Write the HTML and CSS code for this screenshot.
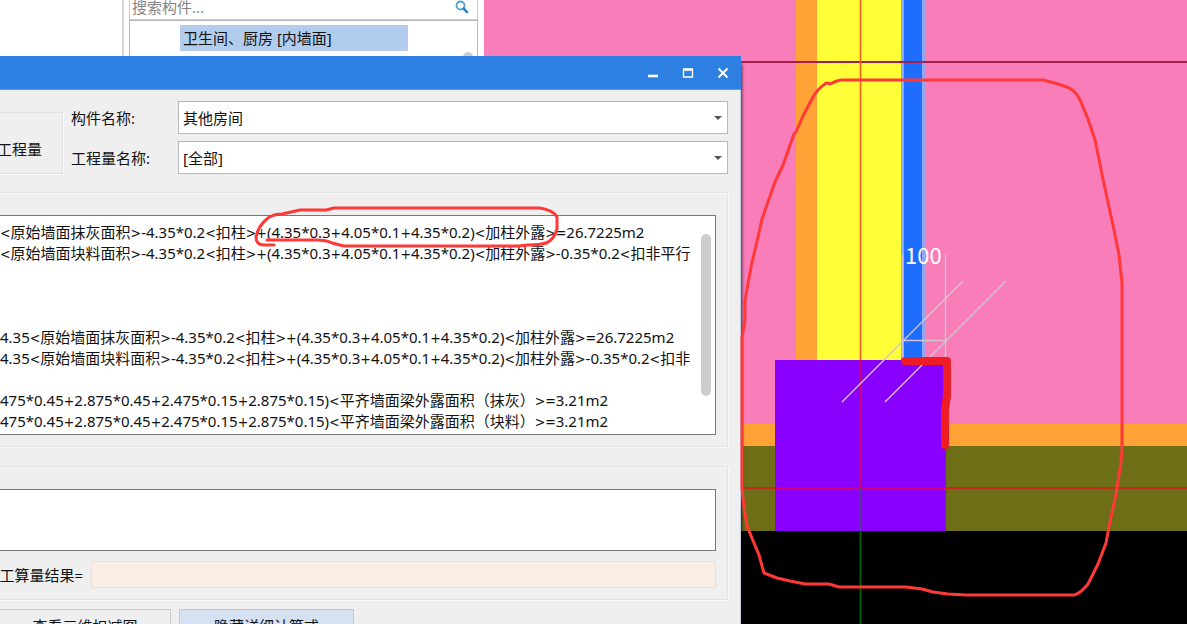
FILE: index.html
```html
<!DOCTYPE html>
<html lang="zh-CN">
<head>
<meta charset="utf-8">
<title>查看工程量计算式</title>
<link rel="stylesheet" href="styles.css">
</head>
<body>
<div class="app">
  <aside class="tree"></aside>
  <section class="components">
    <div class="search">
      <input class="search-input" type="text" placeholder="搜索构件..." aria-label="搜索构件">
      <svg class="search-icon" viewBox="0 0 14 14" aria-hidden="true">
        <circle cx="5.5" cy="5.5" r="4" fill="none" stroke="#4fa0d4" stroke-width="1.8"/>
        <path d="M8.6 8.6 12 12" stroke="#2f86c4" stroke-width="2.6" stroke-linecap="round"/>
      </svg>
    </div>
    <div class="component-list">
      <div class="component">卫生间、厨房 [内墙面]</div>
      <span class="list-thumb"></span>
    </div>
  </section>
  <main class="canvas">
    <svg class="drawing" viewBox="484 0 703 624" preserveAspectRatio="xMinYMin slice" role="img" aria-label="平面图">
      <rect x="484" y="0" width="703" height="624" fill="#000"/>
      <rect x="484" y="0" width="703" height="425" fill="#f97db9"/>
      <rect x="796" y="0" width="22" height="425" fill="#ffa337"/>
      <rect x="817" y="0" width="85" height="362" fill="#ffff37"/>
      <rect x="901" y="0" width="24" height="360" fill="#8fa8ef"/>
      <rect x="904" y="0" width="18" height="360" fill="#1f6dff"/>
      <rect x="484" y="424" width="703" height="22" fill="#ffa337"/>
      <rect x="484" y="446" width="703" height="85" fill="#6e6e17"/>
      <rect x="775" y="360" width="171" height="171" fill="#8a00ff"/>
      <path d="M484 62H1187" stroke="#a51f4c" stroke-width="2"/>
      <path d="M484 488H1187" stroke="#c5291c" stroke-width="2"/>
      <path d="M775 488H946" stroke="#cf0078" stroke-width="2"/>
      <path d="M860.5 0V360" stroke="#ff5a20" stroke-width="1.6"/>
      <path d="M860.5 360V488" stroke="#cc0068" stroke-width="2"/>
      <path d="M860.5 488V531" stroke="#57389c" stroke-width="2"/>
      <path d="M860.5 531V624" stroke="#005c08" stroke-width="2"/>
      <g fill="none" stroke="#d2c4d2" stroke-width="1.4">
        <path d="M902.500 255V360M945.500 255V360M902 340.500H946"/>
        <path d="M842 402 963 281M885 402 1006 281"/>
      </g>
      <text class="dimension" x="905" y="264">100</text>
      <g fill="none" stroke="#ee1c25" stroke-width="8" stroke-linecap="round" stroke-linejoin="round">
        <path d="M905 361H947V396L945 409V445"/>
      </g>
    </svg>
  </main>

  <div class="dialog" role="dialog" aria-label="查看工程量计算式">
    <header class="titlebar">
      <button class="win-btn" aria-label="最小化"><svg viewBox="0 0 12 12"><path d="M1 9H11" stroke="#fff" stroke-width="2.600"/></svg></button>
      <button class="win-btn" aria-label="最大化"><svg viewBox="0 0 12 12"><path d="M1.500 2V10H10.500V2" fill="none" stroke="#fff" stroke-width="1.400"/><path d="M1 2.500H11" stroke="#fff" stroke-width="2.600"/></svg></button>
      <button class="win-btn" aria-label="关闭"><svg viewBox="0 0 12 12"><path d="M1.500 1.500 10.500 10.500M10.500 1.500 1.500 10.500" stroke="#fff" stroke-width="2"/></svg></button>
    </header>
    <div class="body">
      <div class="filters">
        <button class="calc-btn">工程量</button>
        <div class="fields">
          <label for="component">构件名称:</label>
          <div class="combo">
            <select id="component"><option>其他房间</option></select>
            <svg class="caret" viewBox="0 0 8 4" aria-hidden="true"><path d="M0 0H8L4 4Z" fill="#555"/></svg>
          </div>
          <label for="quantity">工程量名称:</label>
          <div class="combo">
            <select id="quantity"><option>[全部]</option></select>
            <svg class="caret" viewBox="0 0 8 4" aria-hidden="true"><path d="M0 0H8L4 4Z" fill="#555"/></svg>
          </div>
        </div>
      </div>
      <section class="group">
        <div class="formula-box">
          <div class="memo formulas"><i>&lt;</i>原始墙面抹灰面积<i>&gt;</i>-4.35*0.2<i>&lt;</i>扣柱<i>&gt;+</i>(4.35*0.3<i>+</i>4.05*0.1<i>+</i>4.35*0.2)<i>&lt;</i>加柱外露<i>&gt;=</i>26.7225m2
<i>&lt;</i>原始墙面块料面积<i>&gt;</i>-4.35*0.2<i>&lt;</i>扣柱<i>&gt;+</i>(4.35*0.3<i>+</i>4.05*0.1<i>+</i>4.35*0.2)<i>&lt;</i>加柱外露<i>&gt;</i>-0.35*0.2<i>&lt;</i>扣非平行



4.35<i>&lt;</i>原始墙面抹灰面积<i>&gt;</i>-4.35*0.2<i>&lt;</i>扣柱<i>&gt;+</i>(4.35*0.3<i>+</i>4.05*0.1<i>+</i>4.35*0.2)<i>&lt;</i>加柱外露<i>&gt;=</i>26.7225m2
4.35<i>&lt;</i>原始墙面块料面积<i>&gt;</i>-4.35*0.2<i>&lt;</i>扣柱<i>&gt;+</i>(4.35*0.3<i>+</i>4.05*0.1<i>+</i>4.35*0.2)<i>&lt;</i>加柱外露<i>&gt;</i>-0.35*0.2<i>&lt;</i>扣非

475*0.45<i>+</i>2.875*0.45<i>+</i>2.475*0.15<i>+</i>2.875*0.15)<i>&lt;</i>平齐墙面梁外露面积（抹灰）<i>&gt;=</i>3.21m2
475*0.45<i>+</i>2.875*0.45<i>+</i>2.475*0.15<i>+</i>2.875*0.15)<i>&lt;</i>平齐墙面梁外露面积（块料）<i>&gt;=</i>3.21m2</div>
          <span class="memo-thumb"></span>
        </div>
      </section>
      <section class="group">
        <textarea class="memo manual" aria-label="手工算量"></textarea>
        <div class="result">
          <label for="result">工算量结果=</label>
          <input id="result" type="text" readonly>
        </div>
      </section>
      <footer class="actions">
        <button class="action">查看三维扣减图</button>
        <button class="action primary">隐藏详细计算式</button>
      </footer>
    </div>
  </div>

  <svg class="markup" viewBox="0 0 1187 624" preserveAspectRatio="xMinYMin slice" aria-hidden="true">
    <g fill="none" stroke="#ff3838" stroke-width="3" stroke-linecap="round" stroke-linejoin="round">
      <path d="M274 245H264Q256 245 256 237Q258 226 268 218Q274 214 282 214L300 210H326L334 208H540Q553 210 557 217V229Q554 240 546 243Q540 245 528 245L518 246H344L332 243Q326 240 316 240H267"/>
      <path d="M825 84Q818 88 812 99L803 116L796 132L794 134L783 165L775 182L762 219L755 250L752 262L745 300V320L742 337V488L744 508L747 526L754 543L759 555L764 573L777 578L790 581L805 584H829L839 587H906L922 589L933 592L948 594L966 595H1074Q1080 594 1088 584L1098 564L1106 543L1109 527L1116 494L1121 462L1122 450V283L1119 255L1114 230L1103 179L1095 140L1088 119L1081 102Q1077 93 1071 89Q1064 85 1043 80H842Q838 80 830 84Q826 82 825 84"/>
    </g>
  </svg>
</div>
</body>
</html>
```

FILE: styles.css
```css
* {
  box-sizing: border-box;
}

body {
  margin: 0;
  overflow: hidden;
}

body,
button,
input,
select,
textarea {
  font-family: "Noto Sans", "Noto Sans CJK SC", sans-serif;
  font-size: 15px;
  color: #111;
}

.app {
  position: relative;
  display: flex;
  height: 100vh;
  overflow: hidden;
  background: #fff;
}

/* Panels behind the dialog */
.tree {
  flex: 0 0 124px;
  border-right: 2px solid #d5d7da;
}

.components {
  flex: 0 0 360px;
  display: flex;
  flex-direction: column;
  padding: 0 6px 0 5px;
}

.search {
  display: flex;
  align-items: center;
  height: 20px;
  padding: 0 8px 6px 2px;
  border: 1px solid #c9cbce;
  border-top: 0;
}

.search-input {
  flex: 1;
  min-width: 0;
  padding: 0;
  border: 0;
  background: none;
  line-height: 20px;
}

.search-input::placeholder {
  color: #858585;
}

.search-icon {
  width: 14px;
  height: 14px;
}

.component-list {
  position: relative;
  flex: 1;
  padding: 4px 69px 0 50px;
  border: 1px solid #b9bbbe;
}

.component {
  padding: 0 3px;
  background: #b2ccee;
  line-height: 26px;
}

.list-thumb {
  position: absolute;
  top: 31px;
  right: 4px;
  width: 10px;
  height: 90px;
  border-radius: 5px;
  background: #cdcdcd;
}

.canvas {
  flex: 1;
  min-width: 0;
  background: #000;
}

.drawing {
  display: block;
  width: 100%;
  height: 100%;
}

.dimension {
  font-family: "Noto Sans CJK SC", sans-serif;
  font-size: 22px;
  fill: #fff;
}

/* Dialog window */
.dialog {
  position: absolute;
  top: 56px;
  left: 0;
  right: 446px;
  bottom: 0;
  display: flex;
  flex-direction: column;
  background: #efefef;
  box-shadow: 1px 8px 3px rgba(0, 0, 0, 0.7);
}

.titlebar {
  display: flex;
  justify-content: flex-end;
  align-items: center;
  flex: 0 0 34px;
  padding-right: 6px;
  border-bottom: 1px solid #5b9bea;
  background: #2d7fe2;
}

.win-btn {
  display: grid;
  place-items: center;
  width: 24px;
  height: 24px;
  margin-left: 11px;
  padding: 0;
  border: 0;
  background: none;
}

.win-btn svg {
  width: 12px;
  height: 12px;
}

.body {
  flex: 1;
  min-height: 0;
  overflow: hidden;
  padding: 11px 12px 0 0;
  border-right: 1px solid #c3cfdf;
}

.filters {
  display: flex;
  align-items: flex-end;
  gap: 8px;
}

.calc-btn {
  display: flex;
  justify-content: flex-end;
  align-items: center;
  flex: 0 0 63px;
  min-width: 0;
  height: 62px;
  padding: 10px 20px 0 0;
  border: 1px solid #e2e2e2;
  border-left: 0;
  background: #efefef;
  box-shadow: 1px 1px 0 #fafafa;
  white-space: nowrap;
}

.fields {
  flex: 1;
  display: grid;
  grid-template-columns: 100px 1fr;
  gap: 7px;
  align-items: center;
}

.combo {
  position: relative;
}

.combo select {
  display: block;
  width: 100%;
  height: 33px;
  padding: 0 24px 0 4px;
  border: 1px solid #b8b8b8;
  border-radius: 0;
  appearance: none;
  background: #fff;
}

.caret {
  position: absolute;
  top: 15px;
  right: 6px;
  width: 8px;
  height: 4px;
  pointer-events: none;
}

.group {
  margin: 18px 0 19px;
  padding: 22px 11px 11px 0;
  border: 1px solid #e2e2e2;
  border-left: 0;
  box-shadow: 1px 1px 0 #fafafa, inset 0 1px 0 #fafafa;
}

.formula-box {
  position: relative;
}

.memo {
  display: block;
  width: 100%;
  margin: 0;
  border: 1px solid #777;
  border-left: 0;
  border-radius: 0;
  resize: none;
  outline: 0;
  overflow: hidden;
  background: #fff;
}

.formulas {
  height: 220px;
  padding: 6px 16px 0 0;
  line-height: 21px;
  white-space: pre;
}

/* Operators in the formulas */
.formulas i {
  font-family: "DejaVu Sans Condensed", "Noto Sans", sans-serif;
  font-size: 14px;
  font-style: normal;
  line-height: 1;
}

.memo-thumb {
  position: absolute;
  top: 19px;
  right: 5px;
  width: 10px;
  height: 162px;
  border-radius: 5px;
  background: #cdcdcd;
}

.manual {
  height: 62px;
}

.result {
  display: flex;
  align-items: center;
  gap: 8px;
  margin-top: 10px;
}

.result label {
  display: flex;
  justify-content: flex-end;
  flex: 0 0 83px;
  min-width: 0;
  white-space: nowrap;
}

.result input {
  flex: 1;
  min-width: 0;
  height: 27px;
  border: 1px solid #e2e2e2;
  background: #faeee4;
}

.actions {
  display: flex;
  gap: 8px;
  margin-top: -10px;
}

.action {
  width: 175px;
  height: 32px;
  margin: 0;
  padding: 0;
  border: 1px solid #c9c9c9;
  background: #efefef;
}

.action:first-child {
  width: 171px;
  border-left: 0;
}

.primary {
  background: #d6e2f1;
}

/* Freehand marks over every window */
.markup {
  position: absolute;
  top: 0;
  left: 0;
  width: 100%;
  height: 100%;
  pointer-events: none;
}
```
